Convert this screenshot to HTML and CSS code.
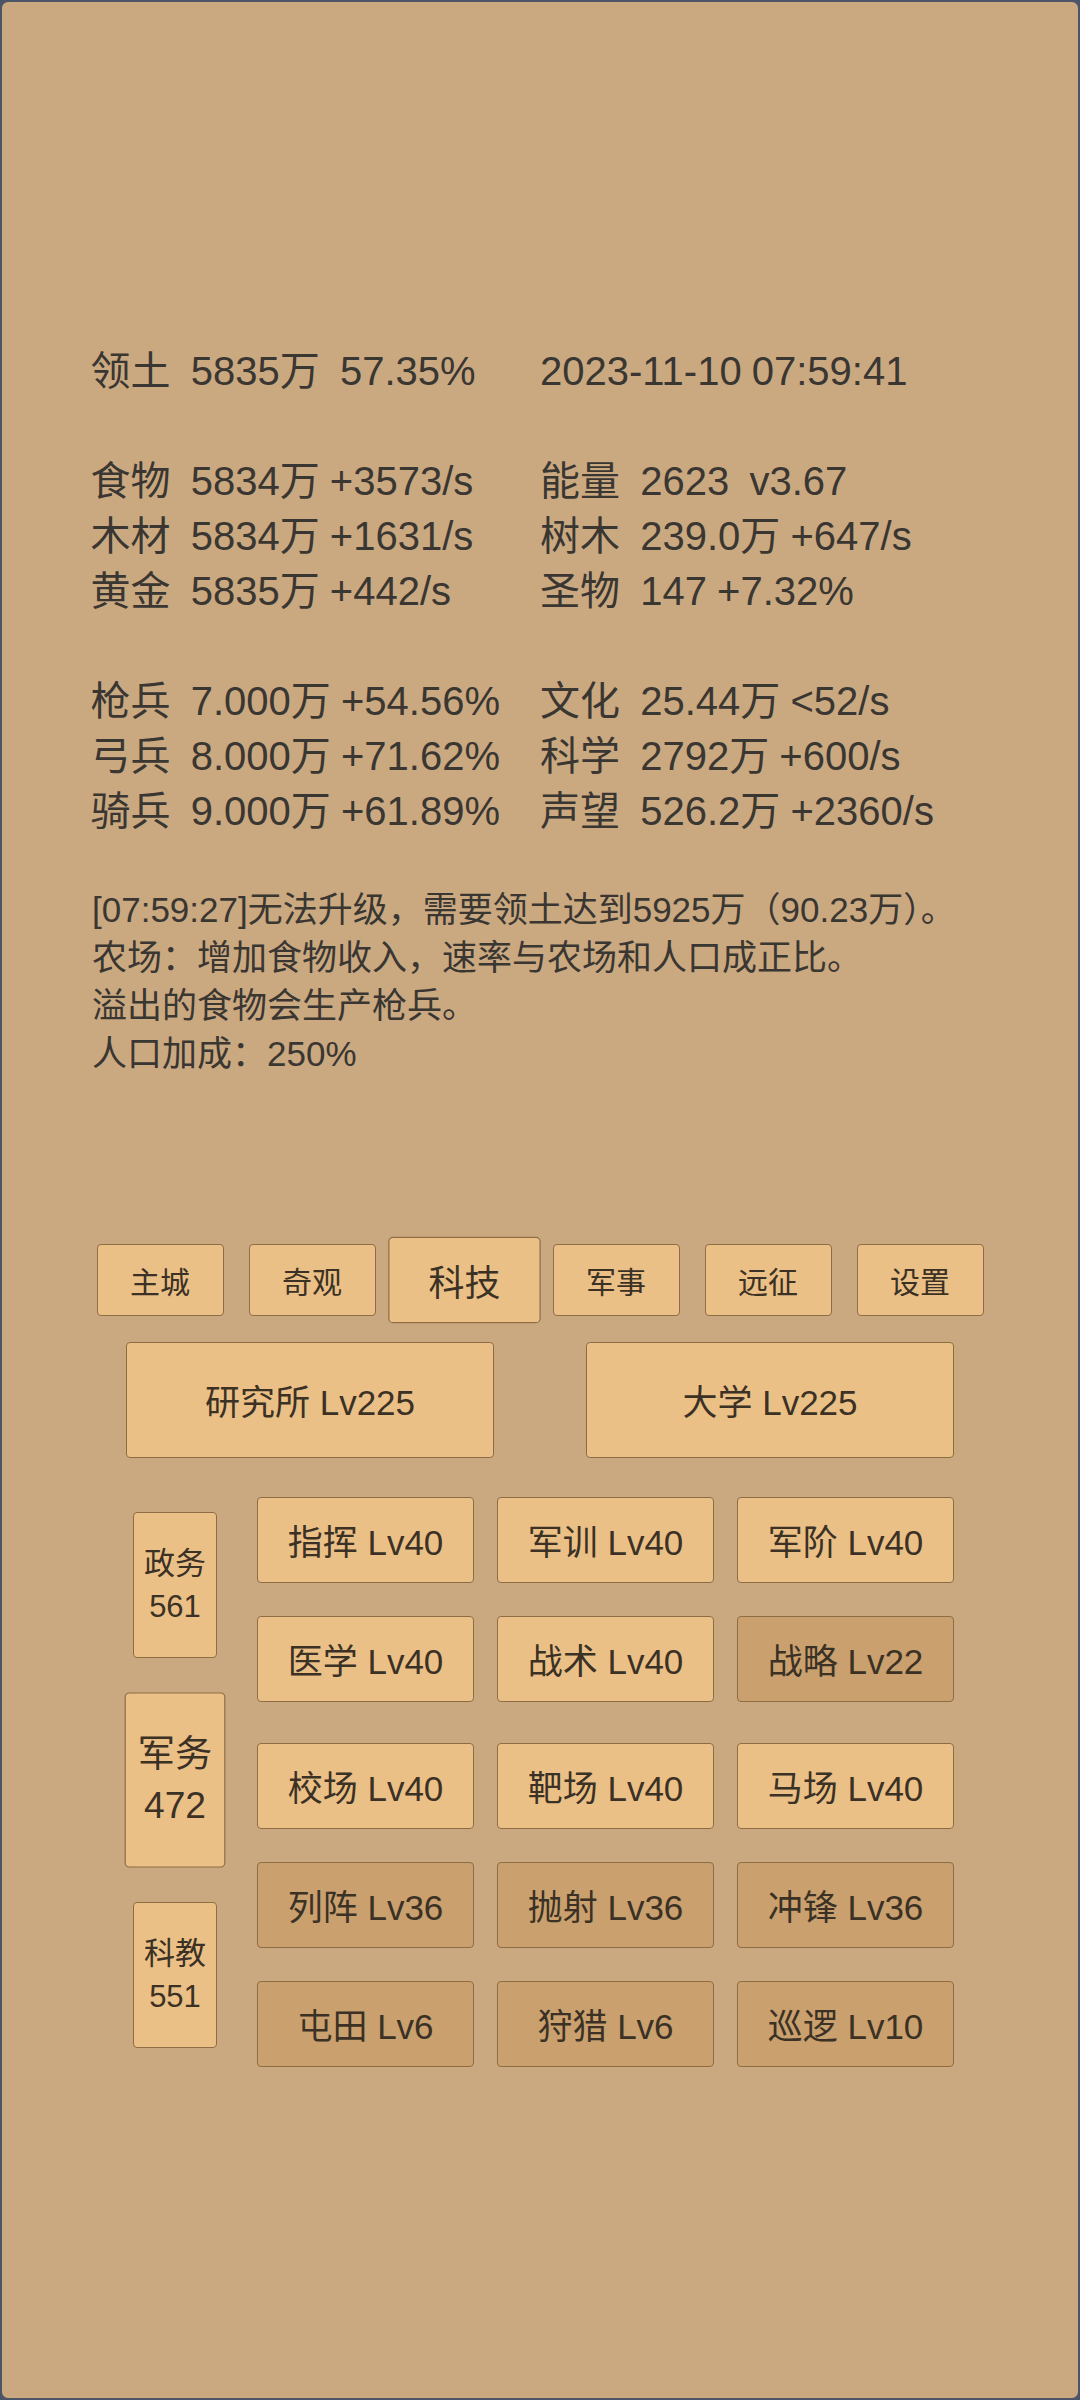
FILE: index.html
```html
<!DOCTYPE html>
<html lang="zh">
<head>
<meta charset="utf-8">
<title>科技</title>
<link rel="stylesheet" href="styles.css">
</head>
<body>
<div class="screen">
  <section class="stats">
    <div class="col col-left">
      <div class="line">领土  5835万  57.35%</div>
      <div class="line"> </div>
      <div class="line">食物  5834万 +3573/s</div>
      <div class="line">木材  5834万 +1631/s</div>
      <div class="line">黄金  5835万 +442/s</div>
      <div class="line"> </div>
      <div class="line">枪兵  7.000万 +54.56%</div>
      <div class="line">弓兵  8.000万 +71.62%</div>
      <div class="line">骑兵  9.000万 +61.89%</div>
    </div>
    <div class="col col-right">
      <div class="line">2023-11-10 07:59:41</div>
      <div class="line"> </div>
      <div class="line">能量  2623  v3.67</div>
      <div class="line">树木  239.0万 +647/s</div>
      <div class="line">圣物  147 +7.32%</div>
      <div class="line"> </div>
      <div class="line">文化  25.44万 &lt;52/s</div>
      <div class="line">科学  2792万 +600/s</div>
      <div class="line">声望  526.2万 +2360/s</div>
    </div>
  </section>

  <section class="log">
    <p>[07:59:27]无法升级，需要领土达到5925万（90.23万）。</p>
    <p>农场：增加食物收入，速率与农场和人口成正比。</p>
    <p>溢出的食物会生产枪兵。</p>
    <p>人口加成：250%</p>
  </section>

  <nav class="nav">
    <div class="btn nav-btn">主城</div>
    <div class="btn nav-btn">奇观</div>
    <div class="btn nav-btn active">科技</div>
    <div class="btn nav-btn">军事</div>
    <div class="btn nav-btn">远征</div>
    <div class="btn nav-btn">设置</div>
  </nav>

  <section class="halls">
    <div class="btn hall-btn">研究所 Lv225</div>
    <div class="btn hall-btn">大学 Lv225</div>
  </section>

  <section class="tech">
    <div class="side">
      <div class="btn side-btn"><span>政务</span><span>561</span></div>
      <div class="btn side-btn active"><span>军务</span><span>472</span></div>
      <div class="btn side-btn"><span>科教</span><span>551</span></div>
    </div>
    <div class="groups">
      <div class="grid">
        <div class="btn cell">指挥 Lv40</div>
        <div class="btn cell">军训 Lv40</div>
        <div class="btn cell">军阶 Lv40</div>
        <div class="btn cell">医学 Lv40</div>
        <div class="btn cell">战术 Lv40</div>
        <div class="btn cell dim">战略 Lv22</div>
      </div>
      <div class="grid">
        <div class="btn cell">校场 Lv40</div>
        <div class="btn cell">靶场 Lv40</div>
        <div class="btn cell">马场 Lv40</div>
        <div class="btn cell dim">列阵 Lv36</div>
        <div class="btn cell dim">抛射 Lv36</div>
        <div class="btn cell dim">冲锋 Lv36</div>
        <div class="btn cell dim">屯田 Lv6</div>
        <div class="btn cell dim">狩猎 Lv6</div>
        <div class="btn cell dim">巡逻 Lv10</div>
      </div>
    </div>
  </section>
</div>
</body>
</html>
```

FILE: styles.css
```css
html, body {
  margin: 0;
  padding: 0;
  background: #4c5468;
}

body {
  font-family: "Liberation Sans", "Noto Sans CJK SC", sans-serif;
  color: #3a3631;
}

.screen {
  box-sizing: border-box;
  width: 1080px;
  height: 2400px;
  border: 2px solid #4c5468;
  border-radius: 8px;
  background: #caa981;
  overflow: hidden;
}

.stats {
  display: flex;
  padding: 342px 0 0 88.5px;
  font-size: 40px;
  word-spacing: -1px;
}

.col-left {
  width: 449.5px;
}

.line {
  height: 55px;
  line-height: 55px;
  white-space: pre;
}

.log {
  margin-top: 46.5px;
  padding-left: 90px;
  font-size: 35px;
  line-height: 48px;
}

.log p {
  margin: 0;
  white-space: nowrap;
}

.btn {
  box-sizing: border-box;
  display: flex;
  align-items: center;
  justify-content: center;
  background: #ebc087;
  border: 1px solid #8e6d45;
  border-radius: 4px;
  color: #3b3124;
  white-space: nowrap;
}

.btn.dim {
  background: #c9a06e;
}

.btn.active {
  transform: scale(1.2);
}

.nav {
  display: flex;
  justify-content: center;
  gap: 25px;
  margin-top: 166px;
}

.nav-btn {
  width: 127px;
  height: 72px;
  font-size: 30px;
}

.halls {
  display: flex;
  justify-content: center;
  gap: 92px;
  margin-top: 26px;
}

.hall-btn {
  width: 368px;
  height: 116px;
  font-size: 35px;
}

.tech {
  display: flex;
  margin-top: 39px;
  padding-left: 131px;
}

.side {
  display: flex;
  flex-direction: column;
  gap: 49px;
  width: 84px;
  padding-top: 15px;
  margin-right: 40px;
}

.side-btn {
  flex-direction: column;
  width: 84px;
  height: 146px;
  font-size: 31px;
  line-height: 43px;
}

.groups {
  display: flex;
  flex-direction: column;
  gap: 41px;
}

.grid {
  display: grid;
  grid-template-columns: repeat(3, 217px);
  grid-auto-rows: 86px;
  column-gap: 23px;
  row-gap: 33px;
}

.cell {
  font-size: 35px;
}
```
